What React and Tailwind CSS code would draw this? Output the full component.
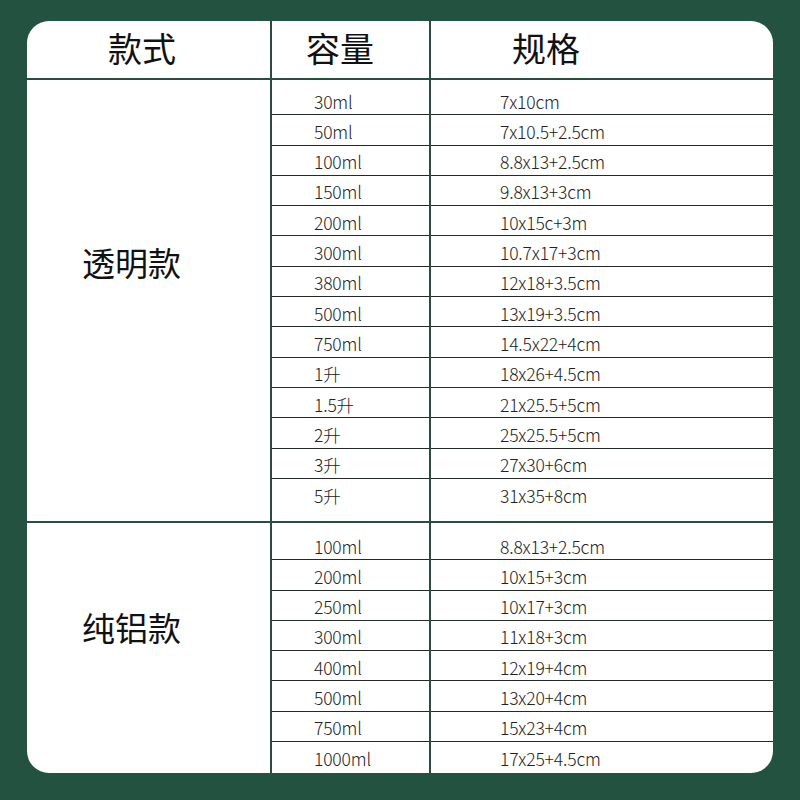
import React from "react";

const clear = [
  ["30ml", "7x10cm"],
  ["50ml", "7x10.5+2.5cm"],
  ["100ml", "8.8x13+2.5cm"],
  ["150ml", "9.8x13+3cm"],
  ["200ml", "10x15c+3m"],
  ["300ml", "10.7x17+3cm"],
  ["380ml", "12x18+3.5cm"],
  ["500ml", "13x19+3.5cm"],
  ["750ml", "14.5x22+4cm"],
  ["1升", "18x26+4.5cm"],
  ["1.5升", "21x25.5+5cm"],
  ["2升", "25x25.5+5cm"],
  ["3升", "27x30+6cm"],
  ["5升", "31x35+8cm"],
];

const foil = [
  ["100ml", "8.8x13+2.5cm"],
  ["200ml", "10x15+3cm"],
  ["250ml", "10x17+3cm"],
  ["300ml", "11x18+3cm"],
  ["400ml", "12x19+4cm"],
  ["500ml", "13x20+4cm"],
  ["750ml", "15x23+4cm"],
  ["1000ml", "17x25+4.5cm"],
];

const font = { fontFamily: '"Noto Sans CJK SC", "Noto Sans", sans-serif' };

const Rows = ({ items, className }) => {
  return (
    <div className={`flex flex-col ${className}`}>
      {items.map(([cap, size], i) => (
        <div
          key={cap + i}
          className={`flex h-[30.3px] items-center text-[17.5px] font-light tracking-[-0.01em] text-[#222] ${
            i < items.length - 1 ? "border-b border-[#232a27]" : ""
          }`}
        >
          <div className="w-[158px] pl-[42px] pt-[4px]">{cap}</div>
          <div className="pl-[70px] pt-[4px]">{size}</div>
        </div>
      ))}
    </div>
  );
};

const Section = ({ label, items, height, pt, pb }) => {
  return (
    <div className="flex" style={{ height }}>
      <div
        className="flex w-[243px] items-center pl-[55px] text-[33px] font-normal text-[#111]"
        style={{ paddingBottom: pb }}
      >
        {label}
      </div>
      <div className="relative flex-1 border-l-2 border-[#2b4d40]">
        <div className="absolute left-[157px] top-0 h-full border-l-2 border-[#2b4d40]" />
        <Rows items={items} className={pt} />
      </div>
    </div>
  );
};

export default function App() {
  return (
    <div className="flex h-[800px] w-[800px] bg-[#245240] px-[27px] pt-[21px] pb-[27px]" style={font}>
      <div className="flex w-[747px] flex-col overflow-hidden rounded-[22px] bg-white">
        <div className="flex h-[59px] border-b-2 border-[#2b4d40] text-[34px] font-normal text-[#111]">
          <div className="flex w-[243px] items-center pl-[81px] pb-[4px]">款式</div>
          <div className="flex w-[159px] items-center border-l-2 border-[#2b4d40] pl-[34px] pb-[4px]">容量</div>
          <div className="flex flex-1 items-center border-l-2 border-[#2b4d40] pl-[81px] pb-[4px]">规格</div>
        </div>
        <div className="border-b-2 border-[#2b4d40]">
          <Section label="透明款" items={clear} height="441px" pt="pt-[5px]" pb="76px" />
        </div>
        <Section label="纯铝款" items={foil} height="250px" pt="pt-[7px]" pb="40px" />
      </div>
    </div>
  );
}
